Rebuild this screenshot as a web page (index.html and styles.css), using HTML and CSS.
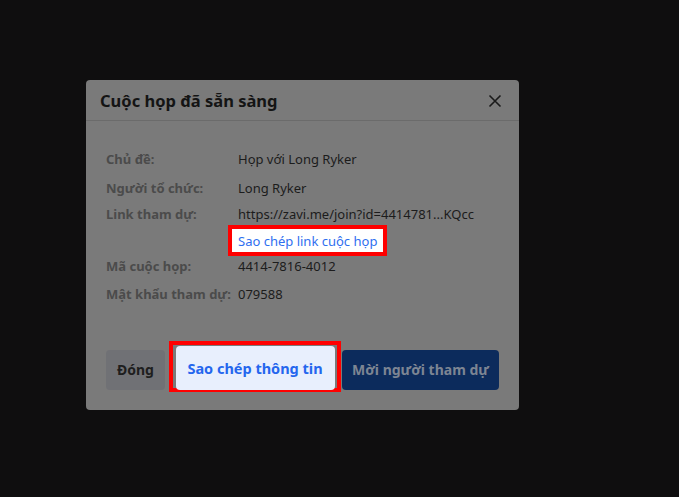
FILE: index.html
```html
<!DOCTYPE html>
<html lang="vi">
<head>
<meta charset="utf-8">
<link rel="stylesheet" href="styles.css">
</head>
<body>
<div class="stage">
  <div class="modal">
    <div class="modal-header">
      <div class="title">Cuộc họp đã sẵn sàng</div>
      <svg class="close" width="14" height="14" viewBox="0 0 14 14"><path d="M1.5 1.5 L12.5 12.5 M12.5 1.5 L1.5 12.5" stroke="#1a1a1a" stroke-width="1.6" fill="none"/></svg>
    </div>
    <div class="modal-body">
      <div class="row r1"><div class="label">Chủ đề:</div><div class="value">Họp với Long Ryker</div></div>
      <div class="row r2"><div class="label">Người tổ chức:</div><div class="value">Long Ryker</div></div>
      <div class="row link-row">
        <div class="label">Link tham dự:</div>
        <div class="value">
          <div>https://zavi.me/join?id=4414781...KQcc</div>
          <div class="hl hl-link"><span class="copy-link">Sao chép link cuộc họp</span></div>
        </div>
      </div>
      <div class="row r4"><div class="label">Mã cuộc họp:</div><div class="value">4414-7816-4012</div></div>
      <div class="row r5"><div class="label">Mật khẩu tham dự:</div><div class="value">079588</div></div>
    </div>
    <div class="modal-footer">
      <div class="btn btn-close">Đóng</div>
      <div class="hl hl-btn"><div class="btn btn-copy">Sao chép thông tin</div></div>
      <div class="btn btn-invite">Mời người tham dự</div>
    </div>
  </div>
</div>
</body>
</html>
```
FILE: styles.css
```css
html, body {
  margin: 0;
  padding: 0;
  background: #0f0e0f;
  width: 679px;
  height: 497px;
  overflow: hidden;
}
.stage {
  padding: 80px 0 0 86px;
  font-family: "Noto Sans", "Open Sans", sans-serif;
}
.modal {
  width: 433px;
  height: 330px;
  background: #7a7a7a;
  border-radius: 4px;
  display: flex;
  flex-direction: column;
  box-sizing: border-box;
}
.modal-header {
  height: 41px;
  box-sizing: border-box;
  border-bottom: 1px solid #6b6b6b;
  display: flex;
  align-items: center;
  justify-content: space-between;
  padding: 1px 17px 0 14px;
}
.title {
  font-size: 16.5px;
  font-weight: 700;
  color: #141414;
}
.close { display: block; }
.modal-body {
  padding: 29px 20px 0 20px;
  display: flex;
  flex-direction: column;
  font-size: 13px;
}
.row {
  display: grid;
  grid-template-columns: 132px 1fr;
  align-items: start;
  line-height: 18px;
}
.r1 { height: 29px; }
.r2 { height: 26px; }
.link-row { height: 52px; }
.r4 { height: 28px; }
.r5 { height: 28px; }
.label {
  font-weight: 700;
  color: #4b4b4b;
}
.value {
  color: #1c1c1c;
}
.hl {
  border: 4px solid #ff0000;
  box-sizing: border-box;
}
.hl-link {
  display: inline-flex;
  align-items: center;
  height: 31px;
  margin: 2px 0 0 -10px;
  padding: 0 6px;
  background: #ffffff;
}
.copy-link {
  color: #2f6ff0;
  font-size: 13px;
}
.modal-footer {
  margin-top: auto;
  padding: 0 20px 15px 20px;
  display: flex;
  align-items: center;
}
.btn {
  height: 40px;
  border-radius: 4px;
  display: flex;
  align-items: center;
  justify-content: center;
  font-weight: 700;
  font-size: 14px;
  box-sizing: border-box;
}
.btn-close {
  width: 59px;
  background: #707175;
  color: #1e1e1e;
}
.hl-btn {
  margin: -3px 0 3px 4px;
  width: 172px;
  height: 51px;
  display: flex;
  align-items: center;
  justify-content: center;
  background: #7a7a7a;
}
.btn-copy {
  width: 159px;
  height: 44px;
  margin-top: 3px;
  background: #e8effd;
  color: #2466ee;
  font-size: 14.5px;
}
.btn-invite {
  margin-left: 1px;
  width: 157px;
  background: #0c2b5c;
  color: #7d8593;
}
```
